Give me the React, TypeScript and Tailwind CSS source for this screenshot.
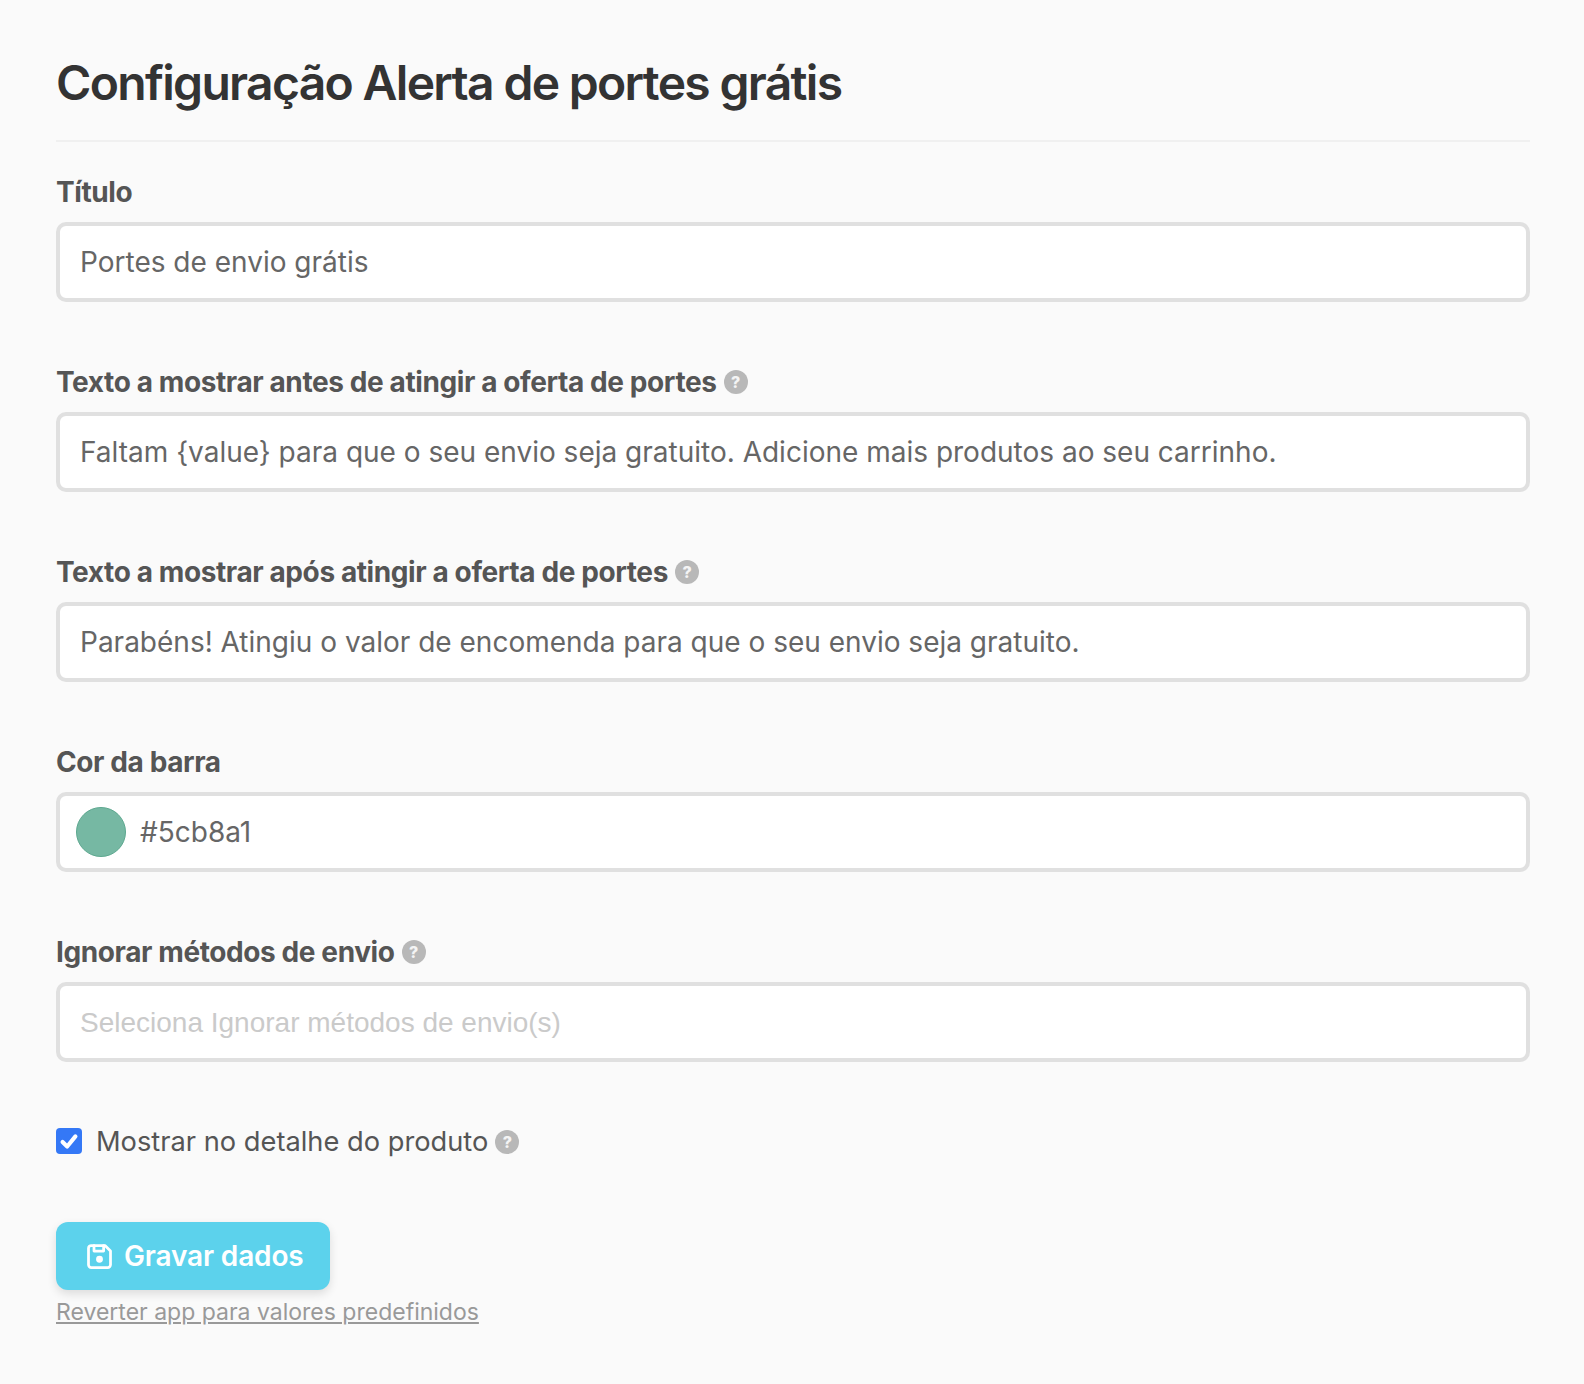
function Help() {
  return (
    <span className="ml-[7px] flex h-6 w-6 shrink-0 items-center justify-center rounded-full bg-[#b8b8b8] text-[16px] font-extrabold leading-none text-[#f4f4f4]">
      ?
    </span>
  );
}

function Field({ label, help, children }: { label: string; help?: boolean; children: React.ReactNode }) {
  return (
    <div className="mb-[63px]">
      <label className="mb-[13px] flex h-[34px] items-center text-[28px] font-[650] tracking-[-0.4px] text-[#555]">
        {label}
        {help && <Help />}
      </label>
      {children}
    </div>
  );
}

const inputClass =
  "block h-20 w-full rounded-[10px] border-4 border-[#e0e0e0] bg-white px-5 text-[28px] text-[#666] outline-none placeholder:font-['Liberation_Sans',sans-serif] placeholder:text-[#cacaca]";

export default function App() {
  return (
    <div className="min-h-[1384px] bg-[#fafafa] pl-14 pr-[54px] pt-[53px] font-['Inter',sans-serif]">
      <h1 className="h-[89px] border-b-2 border-[#f0f0f0] text-[48px] font-semibold leading-[60px] tracking-[-1.68px] text-[#333]">
        Configuração Alerta de portes grátis
      </h1>
      <div className="pt-[33px]">
        <Field label="Título">
          <input readOnly className={inputClass} value="Portes de envio grátis" />
        </Field>
        <Field label="Texto a mostrar antes de atingir a oferta de portes" help>
          <input
            readOnly
            className={inputClass}
            value="Faltam {value} para que o seu envio seja gratuito. Adicione mais produtos ao seu carrinho."
          />
        </Field>
        <Field label="Texto a mostrar após atingir a oferta de portes" help>
          <input
            readOnly
            className={inputClass}
            value="Parabéns! Atingiu o valor de encomenda para que o seu envio seja gratuito."
          />
        </Field>
        <Field label="Cor da barra">
          <div className="flex h-20 w-full items-center rounded-[10px] border-4 border-[#e0e0e0] bg-white pl-4 text-[28px] text-[#666]">
            <span className="h-[50px] w-[50px] shrink-0 rounded-full border border-[#5da88f] bg-[#76b8a3]" />
            <span className="ml-[14px]">#5cb8a1</span>
          </div>
        </Field>
        <Field label="Ignorar métodos de envio" help>
          <input readOnly className={inputClass} placeholder="Seleciona Ignorar métodos de envio(s)" />
        </Field>
        <div className="flex h-[34px] items-center text-[27.25px] text-[#555]">
          <span className="mb-[2px] flex h-[26px] w-[26px] shrink-0 items-center justify-center rounded-[4px] bg-[#3478f6]">
            <svg viewBox="0 0 24 24" className="h-[22px] w-[22px]" fill="none" stroke="white" strokeWidth="4.5" strokeLinecap="round" strokeLinejoin="round">
              <path d="M5 13l5 5L19 7" />
            </svg>
          </span>
          <span className="ml-[14px]">Mostrar no detalhe do produto</span>
          <Help />
        </div>
        <button className="mt-[63px] flex h-[68px] w-[274px] items-center justify-start rounded-xl bg-[#5cd2ec] pl-[27px] text-[28px] font-semibold tracking-[-0.15px] text-white shadow-[0_4px_10px_rgba(0,0,0,0.12)]">
          <svg viewBox="0 0 24 24" className="mr-[8px] h-[33px] w-[33px]" fill="none" stroke="white" strokeWidth="2" strokeLinecap="round" strokeLinejoin="round">
            <path d="M6 4h10l4 4v10a2 2 0 0 1-2 2H6a2 2 0 0 1-2-2V6a2 2 0 0 1 2-2" />
            <circle cx="12" cy="14" r="1.5" fill="white" />
            <path d="M15 4v4H8V4" />
          </svg>
          Gravar dados
        </button>
        <a className="mt-[6px] block text-[23px] leading-8 text-[#999] underline">Reverter app para valores predefinidos</a>
      </div>
    </div>
  );
}
